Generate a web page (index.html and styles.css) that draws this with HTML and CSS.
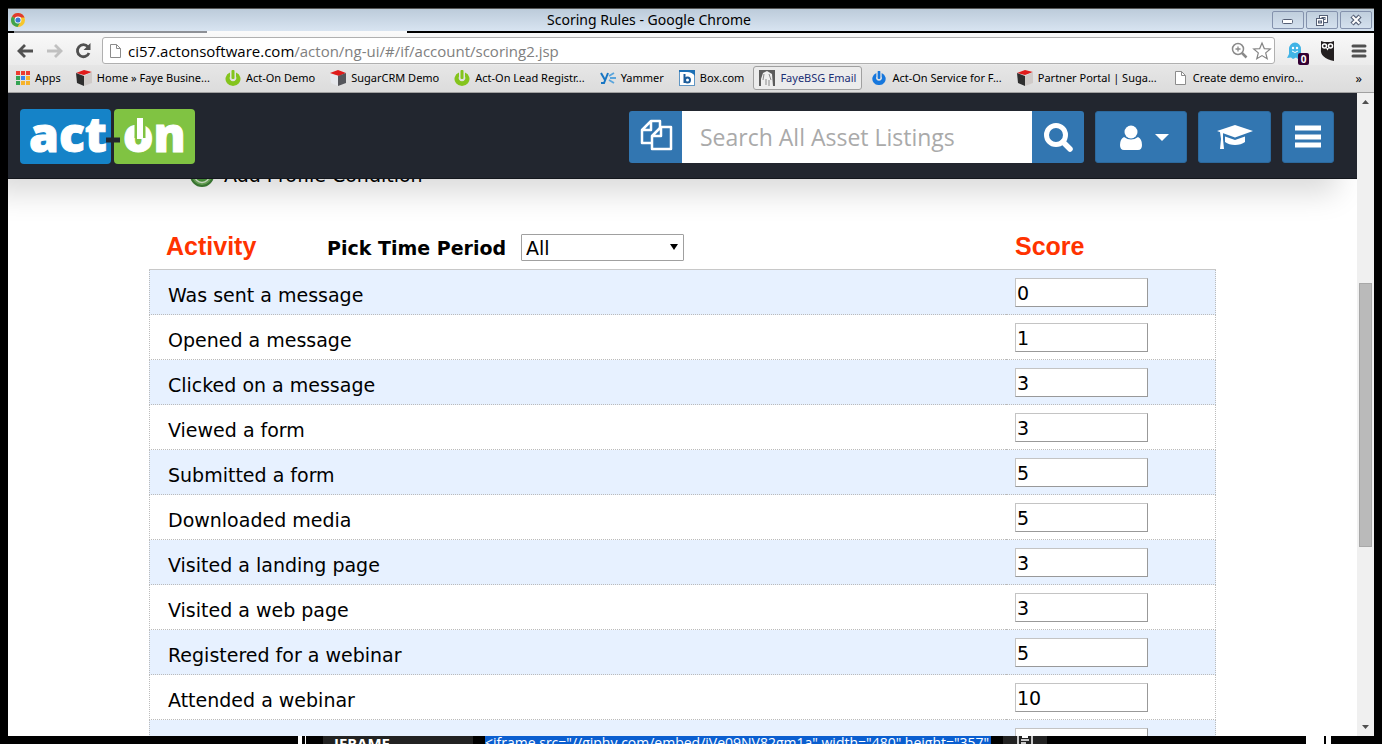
FILE: index.html
```html
<!DOCTYPE html>
<html lang="en">
  <head>
    <title>Scoring Rules</title>
    <meta charset="utf-8">
    <link rel="stylesheet" href="styles.css">
  </head>

<body>

  <!-- shared icons -->
  <svg class="defs" width="0" height="0">
    <symbol id="cube" viewBox="0 0 16 16">
      <path d="M0 3L8 0l8 2-8 3z" fill="#e01b1b"/>
      <path d="M0 3l8 3v10l-7-3z" fill="#2e2e2e"/>
      <path d="M8 6l8-4v11l-8 3z" fill="#cfcac8"/>
    </symbol>
    <symbol id="cube2" viewBox="0 0 16 16">
      <path d="M0 3l8-3 8 3-7 3z" fill="#e01b1b"/>
      <path d="M0 4l8 2v10l-7-3z" fill="#e6e8ec"/>
      <path d="M8 6l8-3v10l-8 3z" fill="#55565b"/>
    </symbol>
    <symbol id="power" viewBox="0 0 16 16">
      <path d="M5 2.500a7.500 7 0 1 0 6 0v4a3.300 3.300 0 1 1-6 0z" fill="currentColor"/>
      <rect x="6.500" y="0" width="3" height="9" rx="1" fill="currentColor"/>
    </symbol>
    <symbol id="page" viewBox="0 0 16 16">
      <path d="M3.500 1.500h6l4 4v9h-10z" fill="#fff" stroke="#8c8c8c"/>
      <path d="M9.500 1.500v4h4" fill="none" stroke="#8c8c8c"/>
    </symbol>
  </svg>

  <div class="window">
    <div class="titlebar">
      <svg class="chrome-icon" width="16" height="16" viewBox="0 0 16 16">
        <circle cx="8" cy="8" r="7" fill="#f6c62c"/>
        <path d="M8 8L2 4.400A7 7 0 0 1 14.500 5.500H8z" fill="#df3a2f"/>
        <path d="M8 8L2 4.400A7 7 0 0 0 7.500 15l3-5z" fill="#3fa34d"/>
        <circle cx="8" cy="8" r="3.400" fill="#fff"/>
        <circle cx="8" cy="8" r="2.600" fill="#3a7bd0"/>
      </svg>
      <div class="title">Scoring Rules - Google Chrome</div>
      <div class="winbuttons">
        <button type="button" aria-label="Minimize"><svg width="14" height="12"><rect x="1.500" y="5.500" width="10" height="4" rx="1" fill="#fff" stroke="#555f75"/></svg></button>
        <button type="button" aria-label="Restore"><svg width="14" height="12"><rect x="4.500" y="1.500" width="8" height="7" fill="#fff" stroke="#555f75"/><rect x="7" y="3.500" width="3" height="2" fill="#b9c6d8" stroke="#555f75"/><rect x="1.500" y="4.500" width="7" height="7" fill="#fff" stroke="#555f75"/><rect x="3.500" y="7" width="3" height="2" fill="#b9c6d8" stroke="#555f75"/></svg></button>
        <button type="button" aria-label="Close"><svg width="14" height="12"><path d="M3 2l8 8M11 2l-8 8" stroke="#555f75" stroke-width="4.500"/><path d="M3.500 2.500l7 7M10.500 2.500l-7 7" stroke="#fff" stroke-width="2"/></svg></button>
      </div>
    </div>
    <div class="tabstrip"><span class="tab-back"></span><span class="tab-front"></span></div>

    <div class="toolbar">
      <button type="button" aria-label="Back"><svg width="17" height="16" viewBox="0 0 17 16"><path d="M16 8H3M8 2L2 8l6 6" fill="none" stroke="#505050" stroke-width="2.800"/></svg></button>
      <button type="button" aria-label="Forward"><svg width="17" height="16" viewBox="0 0 17 16"><path d="M1 8h13M9 2l6 6-6 6" fill="none" stroke="#c0c0c0" stroke-width="2.800"/></svg></button>
      <button type="button" aria-label="Reload"><svg width="17" height="16" viewBox="0 0 17 16"><path d="M13 3.800A6 6 0 1 0 14 10" fill="none" stroke="#505050" stroke-width="2.800"/><path d="M15.500 0v7H8.500z" fill="#505050"/></svg></button>
      <div class="omnibox">
        <svg width="16" height="18" viewBox="0 0 16 16"><use href="#page"/></svg>
        <div class="url">ci57.actonsoftware.com<span>/acton/ng-ui/#/if/account/scoring2.jsp</span></div>
        <svg width="17" height="17" viewBox="0 0 17 17"><circle cx="7" cy="7" r="5.500" fill="none" stroke="#8a8a8a" stroke-width="1.500"/><path d="M4.500 7h5M7 4.500v5" stroke="#8a8a8a" stroke-width="1.300"/><path d="M11 11l4.500 4.500" stroke="#8a8a8a" stroke-width="2.500"/></svg>
        <svg width="18" height="18" viewBox="0 0 18 18"><path d="M9 1l2.300 5.600 6 .4-4.600 3.900 1.500 5.900L9 13.600l-5.200 3.200 1.500-5.900L.7 7l6-.4z" fill="#fff" stroke="#858585" stroke-width="1.200"/></svg>
      </div>
      <div class="extensions">
        <button type="button" aria-label="Ghostery" class="ghost"><svg width="16" height="18" viewBox="0 0 16 18"><path d="M2 7a6 6.500 0 0 1 12 0v5l2 4-3-1-2 2-2-1.500L6 17l-2-1.500L0 16l2-4z" fill="#41b4e6"/><circle cx="6" cy="6" r="1.200" fill="#fff"/><circle cx="10" cy="6" r="1.200" fill="#fff"/><path d="M5 9q3 3 6 0" fill="none" stroke="#fff"/></svg><span class="badge">0</span></button>
        <button type="button" aria-label="Hootsuite"><svg width="15" height="20" viewBox="0 0 15 20"><path d="M1 0l3 1h7l3-1v20C5 18 0 14 1 8z" fill="#231f20"/><circle cx="4.500" cy="5" r="2" fill="none" stroke="#fff" stroke-width="1.500"/><circle cx="10.500" cy="5" r="2" fill="none" stroke="#fff" stroke-width="1.500"/><path d="M6 7h3l-1.500 2.500z" fill="#fff"/></svg></button>
        <button type="button" aria-label="Menu"><svg width="14" height="14" viewBox="0 0 14 14"><path d="M1 2h12M1 7h12M1 12h12" stroke="#505050" stroke-width="3" stroke-linecap="round"/></svg></button>
      </div>
    </div>

    <div class="bookmarks">
      <a href="#"><svg width="14" height="14" viewBox="0 0 14 14"><path d="M0 2h14" stroke="#ee3b30" stroke-width="4" stroke-dasharray="4 1"/><path d="M0 7h4" stroke="#34a353" stroke-width="4"/><path d="M5 7h4" stroke="#3c82f0" stroke-width="4"/><path d="M10 7h4M5 12h4M10 12h4" stroke="#f6b32b" stroke-width="4"/><path d="M0 12h4" stroke="#34a353" stroke-width="4"/></svg>Apps</a>
      <a href="#"><svg width="16" height="16"><use href="#cube"/></svg>Home » Faye Busine...</a>
      <a href="#" class="green"><svg width="16" height="16"><use href="#power"/></svg>Act-On Demo</a>
      <a href="#"><svg width="16" height="16"><use href="#cube2"/></svg>SugarCRM Demo</a>
      <a href="#" class="green"><svg width="16" height="16"><use href="#power"/></svg>Act-On Lead Registr...</a>
      <a href="#"><svg width="16" height="16" viewBox="0 0 16 16"><path d="M1 3l4 7M8 3L4 13H1" fill="none" stroke="#1776c4" stroke-width="2"/><path d="M9 6l5-3M10 8h6M9 10l5 3" stroke="#5aa5dc" stroke-width="1.800"/></svg>Yammer</a>
      <a href="#"><svg width="16" height="16" viewBox="0 0 16 16"><rect x=".5" y=".5" width="15" height="15" fill="#fff" stroke="#5f96c4"/><path d="M0 0h16v6q-3-4-8-4H0z" fill="#1c6fb5"/><path d="M5.500 4v9" stroke="#1c5c9a" stroke-width="2"/><circle cx="8.500" cy="10" r="2.500" fill="#fff" stroke="#1c5c9a" stroke-width="2"/></svg>Box.com</a>
      <a href="#" class="hover"><svg width="16" height="16" viewBox="0 0 16 16"><path d="M0 0h16v16H0z" fill="#5c5c5c"/><path d="M2 16V9l2-6 4-2 5 3 1 12z" fill="#eee"/><path d="M5 4l-1 6M10 4l2 6M7 9v6M10 10v6" stroke="#8a8a8a"/></svg>FayeBSG Email</a>
      <a href="#" class="blue"><svg width="16" height="16" viewBox="-1 -1 18 18"><use href="#power" width="16" height="16"/></svg>Act-On Service for F...</a>
      <a href="#"><svg width="16" height="16"><use href="#cube"/></svg>Partner Portal | Suga...</a>
      <a href="#"><svg width="16" height="16"><use href="#page"/></svg>Create demo enviro...</a>
      <button type="button" class="more">»</button>
    </div>

    <div class="viewport">
      <div class="page">
        <div class="header">
          <svg class="logo" width="175" height="56" viewBox="0 0 175 56">
            <rect width="91" height="55" rx="4" fill="#1583c8"/>
            <rect x="94" width="81" height="55" rx="4" fill="#80c342"/>
            <path d="M86 31h14" stroke="#22262f" stroke-width="5"/>
            <text x="9" y="43" class="logo-text">act</text>
            <text x="103" y="43" class="logo-text">on</text>
            <path d="M120 8v21" stroke="#80c342" stroke-width="11"/>
            <path d="M120 9v21" stroke="#fff" stroke-width="6"/>
          </svg>
          <form class="search" onsubmit="return false;">
            <button type="button" class="assets" aria-label="All assets"><svg width="32" height="32" viewBox="0 0 32 32" fill="none" stroke="#fff" stroke-width="2.500" stroke-linejoin="round"><path d="M12 24H2V11l9-9h9v7M11 2v9H2"/><path d="M21 8h10v22H12V17zM21 8v9h-9" fill="#3276b1"/></svg></button>
            <input type="text" name="q" aria-label="Search" placeholder="Search All Asset Listings">
            <button type="submit" aria-label="Search"><svg width="30" height="30" viewBox="0 0 30 30" fill="none" stroke="#fff"><circle cx="13" cy="13" r="9.500" stroke-width="5"/><path d="M20 20l7 7" stroke-width="5.500" stroke-linecap="round"/></svg></button>
          </form>
          <button type="button" class="btn user" aria-label="Account">
            <svg width="24" height="26" viewBox="0 0 24 26" fill="#fff"><circle cx="12" cy="7" r="6.500"/><path d="M5 12q7 5 14 0 4 2 4 8 0 5-4 5H5q-4 0-4-5 0-6 4-8z"/></svg>
            <svg width="14" height="8" viewBox="0 0 14 8"><path d="M0 0h14L7 7z" fill="#fff"/></svg>
          </button>
          <button type="button" class="btn learn" aria-label="Training"><svg width="38" height="26" viewBox="0 0 38 26" fill="#fff"><path d="M19 1l18 6-18 6.500L1 7z"/><path d="M9 12.500l10 3.500 10-3.500V18q-4 3-10 3T9 18z"/><path d="M4 8h3v7l1 10H4l1-10z"/></svg></button>
          <button type="button" class="btn menu" aria-label="Menu"><svg width="28" height="24" viewBox="0 0 28 24"><path d="M1 3h26M1 12h26M1 20h26" stroke="#fff" stroke-width="5"/></svg></button>
        </div>

        <div class="content">
          <a href="#" class="add"><svg width="24" height="24" viewBox="0 0 24 24"><circle cx="12" cy="12" r="11" fill="#6fb05c" stroke="#3f8237" stroke-width="2"/><circle cx="12" cy="12" r="7.500" fill="#4d9a3d" stroke="#d8ecd0" stroke-width="1.500"/></svg>Add Profile Condition</a>

          <table class="scores">
            <thead>
              <tr>
                <th>
                  <div class="activity">
                    <span class="red">Activity</span>
                    <div class="period">
                      <label for="period">Pick Time Period</label>
                      <span class="select"><select id="period"><option>All</option></select></span>
                    </div>
                  </div>
                </th>
                <th class="red score">Score</th>
              </tr>
            </thead>
            <tbody>
              <tr><td><label for="s1">Was sent a message</label></td><td><input type="text" id="s1" value="0"></td></tr>
              <tr><td><label for="s2">Opened a message</label></td><td><input type="text" id="s2" value="1"></td></tr>
              <tr><td><label for="s3">Clicked on a message</label></td><td><input type="text" id="s3" value="3"></td></tr>
              <tr><td><label for="s4">Viewed a form</label></td><td><input type="text" id="s4" value="3"></td></tr>
              <tr><td><label for="s5">Submitted a form</label></td><td><input type="text" id="s5" value="5"></td></tr>
              <tr><td><label for="s6">Downloaded media</label></td><td><input type="text" id="s6" value="5"></td></tr>
              <tr><td><label for="s7">Visited a landing page</label></td><td><input type="text" id="s7" value="3"></td></tr>
              <tr><td><label for="s8">Visited a web page</label></td><td><input type="text" id="s8" value="3"></td></tr>
              <tr><td><label for="s9">Registered for a webinar</label></td><td><input type="text" id="s9" value="5"></td></tr>
              <tr><td><label for="s10">Attended a webinar</label></td><td><input type="text" id="s10" value="10"></td></tr>
              <tr><td></td><td><input type="text" aria-label="Score"></td></tr>
            </tbody>
          </table>
        </div>
      </div>
      <div class="scrollbar">
        <svg width="17" height="17"><path d="M5 11h7L8.500 7z" fill="#505050"/></svg>
        <div class="thumb"></div>
        <svg width="17" height="17"><path d="M5 6h7l-3.500 4z" fill="#505050"/></svg>
      </div>
    </div>
  </div>

  <!-- edge of the window behind -->
  <div class="behind">
    <span class="edge"></span>
    <span class="iframe-label">IFRAME</span>
    <span class="code">&lt;iframe src="//giphy.com/embed/jVe09NV82gm1a" width="480" height="357"</span>
    <span class="copy"><svg width="16" height="16" viewBox="0 0 16 16"><path d="M1 0v16M15 0v16M4 4h8M4 7h5" stroke="#fff" stroke-width="1.500"/><path d="M5 0h6v2H5z" fill="#fff"/></svg></span>
    <span class="bar"></span>
  </div>

</body>
</html>
```

FILE: styles.css
```css
* { box-sizing: border-box; }

body {
  margin: 0;
  padding: 8px 8px 0;
  height: 100vh;
  display: flex;
  flex-direction: column;
  overflow: hidden;
  background: #000;
  color: #000;
  font-family: "Open Sans", "Noto Sans", sans-serif;
}

.defs { position: absolute; }
svg { display: block; flex: none; overflow: visible; }
button { border: 0; padding: 0; background: none; font-family: inherit; }
a { color: inherit; text-decoration: none; }

.window { flex: 1; min-height: 0; display: flex; flex-direction: column; }

/* browser frame */
.titlebar {
  height: 23px;
  display: flex;
  align-items: center;
  padding: 0 2px;
  border-top: 1px solid #555;
  background: linear-gradient(#bccbda, #d8e4f1);
}
.title { flex: 1; text-align: center; font-family: "Noto Sans", sans-serif; font-size: 14px; line-height: 20px; }
.winbuttons { display: flex; gap: 2px; }
.winbuttons button {
  width: 32px;
  height: 18px;
  display: flex;
  align-items: center;
  justify-content: center;
  border: 1px solid #8492ad;
  border-radius: 2px;
}

.tabstrip { height: 2px; display: flex; padding-left: 6px; }
.tab-back { width: 193px; background: #8d9096; }
.tab-front { width: 200px; background: #fafafa; }

.toolbar {
  height: 32px;
  display: flex;
  align-items: center;
  gap: 12px;
  padding: 3px 8px 0 9px;
  background: linear-gradient(#f9f9f9, #ebebeb);
}
.omnibox {
  flex: 1;
  height: 27px;
  display: flex;
  align-items: center;
  gap: 5px;
  margin-left: -2px;
  padding: 0 3px 0 4px;
  border: 1px solid #b0b0b0;
  border-radius: 3px;
  background: #fff;
}
.url { flex: 1; font-size: 15px; line-height: 22px; }
.url span { color: #808080; }
.extensions { display: flex; align-items: center; gap: 17px; }
.ghost { position: relative; }
.badge {
  position: absolute;
  left: 11px;
  top: 11px;
  width: 11px;
  height: 12px;
  border-radius: 2px;
  background: #330033;
  color: #fff;
  font-size: 10px;
  font-weight: bold;
  line-height: 12px;
  text-align: center;
}

.bookmarks {
  height: 28px;
  display: flex;
  align-items: center;
  gap: 3px;
  padding: 0 12px 2px 2px;
  border-bottom: 1px solid #a0a0a0;
  background: linear-gradient(#e6e6e6, #dcdcdc);
  white-space: nowrap;
}
.bookmarks a {
  height: 24px;
  display: flex;
  align-items: center;
  gap: 5px;
  padding: 0 5px;
  border: 1px solid transparent;
  border-radius: 3px;
  font-family: "Noto Sans", sans-serif;
  font-size: 11px;
}
.bookmarks a.hover { border-color: #a0a0a0; background: #ececec; color: #1c2f75; }
.bookmarks .more { margin-left: auto; font-size: 13px; }
.green svg { color: #84c41d; }
.blue svg { color: #1677dd; }

.viewport { flex: 1; min-height: 0; display: flex; background: #fff; }
.page { flex: 1; min-width: 0; overflow: hidden; }

/* vertical scrollbar */
.scrollbar {
  width: 17px;
  display: grid;
  grid-template-rows: 17px 173fr 264fr 172fr 17px;
  background: #f0f0f0;
}
.thumb { grid-row: 3; margin: 0 2px; border: 1px solid #a8a8a8; background: #bababa; }
.scrollbar svg:last-child { grid-row: 5; }

/* app header */
.header {
  position: relative;
  z-index: 1;
  height: 86px;
  display: flex;
  align-items: center;
  gap: 11px;
  padding: 2px 23px 0 12px;
  border-bottom: 1px solid #14171d;
  background: #22262f;
  box-shadow: -20px 14px 30px rgba(0, 0, 0, .15);
}
.logo { margin-right: auto; }
.logo-text {
  font-family: "Open Sans", sans-serif;
  font-size: 48px;
  font-weight: 800;
  fill: #fff;
  stroke: #fff;
  stroke-width: 1px;
}
.search { display: flex; height: 52px; }
.search button, .btn {
  display: flex;
  align-items: center;
  justify-content: center;
  width: 52px;
  height: 52px;
  background: #3276b1;
}
.search .assets { width: 53px; padding-bottom: 3px; }
.search button:first-child { border-radius: 3px 0 0 3px; }
.search button:last-child { border-radius: 0 3px 3px 0; }
.search input {
  width: 350px;
  padding: 0 18px;
  border: 0;
  font-family: inherit;
  font-size: 23px;
}
.search input::placeholder { color: #aaa; }
.btn { gap: 12px; border: 1px solid #2c699d; border-radius: 3px; }
.btn.user { width: 92px; padding: 3px 0 0 6px; }
.btn.learn { width: 73px; }

/* scoring rules */
.content { padding: 0 141px; font-family: Verdana, "DejaVu Sans", sans-serif; font-size: 19px; }
.add {
  height: 26px;
  display: flex;
  align-items: center;
  gap: 10px;
  margin-top: -17px;
  padding-left: 41px;
}
.scores {
  width: 100%;
  margin-top: 36px;
  border-collapse: separate;
  border-spacing: 0;
  table-layout: fixed;
}
.scores th { height: 46px; padding: 0 0 0 17px; border-bottom: 1px solid #c8c8c8; text-align: left; }
.scores th.score { width: 210px; padding-left: 9px; }
.red { color: #ff3300; font-family: Arial, "Liberation Sans", sans-serif; font-size: 25px; }
.activity { display: flex; align-items: center; }
.activity .red { width: 161px; }
.period { display: flex; align-items: center; gap: 15px; padding-top: 2px; }
.select { position: relative; }
.select::after {
  content: "";
  position: absolute;
  right: 6px;
  top: 10px;
  border: 4px solid transparent;
  border-top: 6px solid #000;
  border-bottom: 0;
}
.select select {
  display: block;
  width: 163px;
  height: 27px;
  padding: 0 4px;
  appearance: none;
  border: 1px solid #a0a0a0;
  border-radius: 1px;
  background: #fff;
  color: #000;
  font-family: inherit;
  font-size: 19px;
}
.scores td { height: 45px; padding: 0; border-bottom: 1px dotted #bbb; }
.scores td:first-child { padding: 6px 0 0 18px; border-left: 1px dotted #bbb; }
.scores td:last-child { padding-left: 9px; border-right: 1px dotted #bbb; }
.scores tbody tr:nth-child(odd) { background: #e7f1ff; }
.scores td input {
  display: block;
  width: 133px;
  height: 29px;
  padding: 2px 1px 0;
  border: 1px solid;
  border-color: #c4c4c4 #999 #999 #c4c4c4;
  background: #fff;
  font-family: inherit;
  font-size: 19px;
}

.behind { height: 8px; display: flex; overflow: hidden; color: #fff; white-space: nowrap; }
.behind span { flex: none; height: 24px; line-height: 14px; }
.behind .edge { width: 8px; margin: 0 17px 0 290px; border: solid #fff; border-width: 0 1px 0 4px; }
.behind .iframe-label { width: 150px; padding-left: 11px; background: #222; font-size: 15px; font-weight: bold; }
.behind .code { width: 506px; margin: 0 12px; background: #0a5ed0; font-size: 14px; }
.behind .copy { width: 44px; padding-left: 14px; background: #222; }
.behind .bar { width: 25px; margin-left: 259px; border: solid #fff; border-width: 0 5px 0 18px; }
```
